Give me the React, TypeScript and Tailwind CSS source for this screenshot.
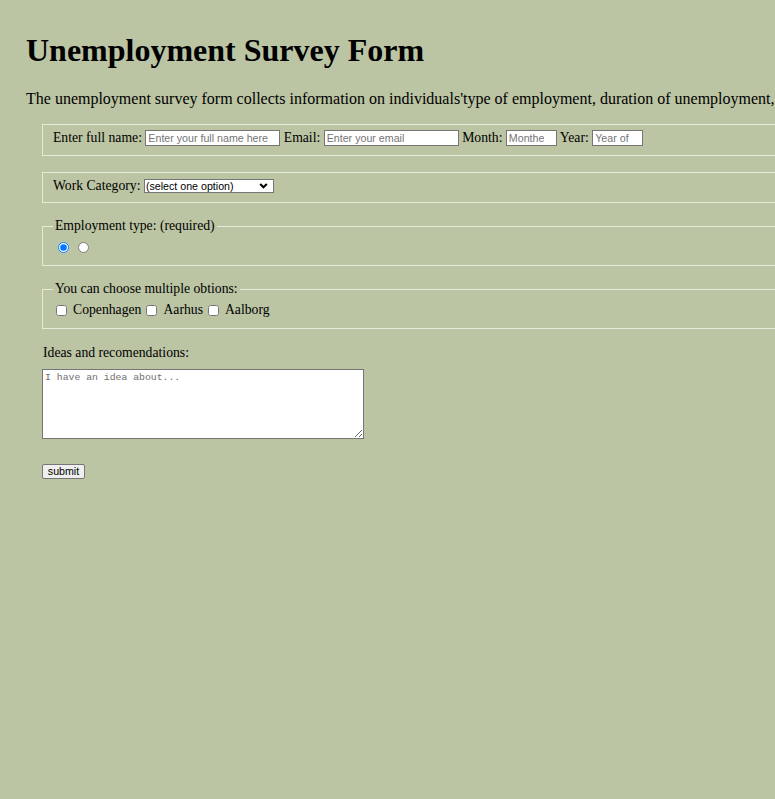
import { useState } from 'react';

const controlFont = "font-['Liberation_Sans',Arial,sans-serif] text-[10.67px]";

function TextField({ placeholder, width, pad = 'pl-[2px] pr-[2px]' }: { placeholder: string; width: string; pad?: string }) {
  return (
    <input
      type="text"
      placeholder={placeholder}
      className={`${controlFont} ${width} ${pad} h-[16px] border border-[#767676] bg-white text-black placeholder:text-[#757575] align-baseline`}
    />
  );
}

function CategorySelect() {
  return (
    <span className="relative inline-block align-baseline">
      <select
        defaultValue=""
        className={`${controlFont} appearance-none w-[130px] h-[14px] pl-[1px] pr-[14px] leading-[12px] border border-[#767676] bg-white text-black`}
      >
        <option value="">(select one option)</option>
        <option value="it">IT</option>
        <option value="health">Health care</option>
        <option value="education">Education</option>
        <option value="other">Other</option>
      </select>
      <svg
        className="absolute right-[6px] top-1/2 -translate-y-1/2 pointer-events-none"
        width="9"
        height="7"
        viewBox="0 0 9 7"
      >
        <path d="M1.2 1.5 L4.5 4.8 L7.8 1.5" fill="none" stroke="#000" strokeWidth="2" />
      </svg>
    </span>
  );
}

export default function App() {
  const [employment, setEmployment] = useState('employed');
  const [cities, setCities] = useState<string[]>([]);

  const toggleCity = (c: string) =>
    setCities((prev) => (prev.includes(c) ? prev.filter((x) => x !== c) : [...prev, c]));

  return (
    <div className="h-screen w-screen overflow-hidden bg-[#bbc4a3] text-black font-['Liberation_Serif','Times_New_Roman',serif]">
      <div className="pt-[32px] pl-[26px] w-[1400px]">
        <h1 className="text-[32px] leading-[37px] font-bold mb-[21px]">Unemployment Survey Form</h1>
        <p className="text-[16px] leading-[18px] mb-[16px] whitespace-nowrap">
          The unemployment survey form collects information on individuals'type of employment, duration of unemployment, and ideas for improving the situation.
        </p>

        <form className="ml-[16px] w-[1300px] text-[13.7px] leading-[16px]" onSubmit={(e) => e.preventDefault()}>
          {/* Personal details */}
          <fieldset className="h-[32px] pt-[5px] px-[10px] border border-[#e6ebd8] whitespace-nowrap">
            Enter full name: <TextField placeholder="Enter your full name here" width="w-[135px]" /> Email:{' '}
            <TextField placeholder="Enter your email" width="w-[135px]" /> Month:{' '}
            <TextField placeholder="Monthes of unemployment" width="w-[51px]" pad="pl-[2px] pr-[12px]" /> Year:{' '}
            <TextField placeholder="Year of unemployment" width="w-[51px]" pad="pl-[2px] pr-[12px]" />
          </fieldset>

          <fieldset className="mt-[16px] h-[31px] pt-[5px] px-[10px] border border-[#e6ebd8] whitespace-nowrap">
            Work Category: <CategorySelect />
          </fieldset>

          {/* Employment type */}
          <fieldset className="mt-[15px] pt-[7px] pb-[11px] px-[10px] border border-[#e6ebd8]">
            <legend className="px-[2px] leading-[16px]">Employment type: (required)</legend>
            <div className="flex items-center h-[13px]">
              <input
                type="radio"
                name="employment"
                checked={employment === 'employed'}
                onChange={() => setEmployment('employed')}
                className="m-0 ml-[5px] w-[11px] h-[11px]"
              />
              <input
                type="radio"
                name="employment"
                checked={employment === 'unemployed'}
                onChange={() => setEmployment('unemployed')}
                className="m-0 ml-[9px] w-[11px] h-[11px]"
              />
            </div>
          </fieldset>

          <fieldset className="mt-[15px] pt-[5px] pb-[10px] px-[10px] border border-[#e6ebd8]">
            <legend className="px-[2px] leading-[16px]">You can choose multiple obtions:</legend>
            <div className="flex items-center h-[16px]">
              {['Copenhagen', 'Aarhus', 'Aalborg'].map((city, i) => (
                <label key={city} className={`flex items-center ${i === 0 ? 'ml-[3px]' : 'ml-[5px]'}`}>
                  <input
                    type="checkbox"
                    checked={cities.includes(city)}
                    onChange={() => toggleCity(city)}
                    className="m-0 w-[11px] h-[11px]"
                  />
                  <span className="ml-[6px]">{city}</span>
                </label>
              ))}
            </div>
          </fieldset>

          <label className="block mt-[16px] ml-[1px]">Ideas and recomendations:</label>
          <textarea
            placeholder="I have an idea about..."
            className="block mt-[8px] w-[322px] h-[70px] px-[2px] py-[2px] border border-[#767676] bg-white font-['Liberation_Mono',monospace] text-[9.8px] leading-[12px] placeholder:text-[#6f6f6f]"
          />

          <button
            type="submit"
            className={`${controlFont} block mt-[25px] w-[43px] h-[15px] leading-[13px] text-black bg-[#efefef] border border-[#767676] rounded-[2px]`}
          >
            submit
          </button>
        </form>
      </div>
    </div>
  );
}
